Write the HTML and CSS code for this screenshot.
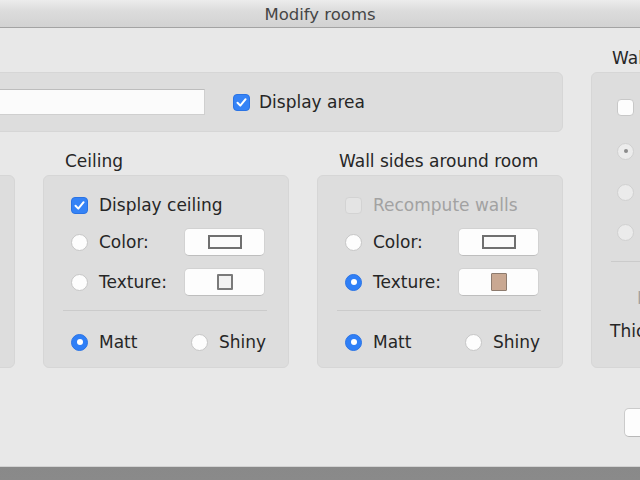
FILE: index.html
```html
<!DOCTYPE html>
<html>
<head>
<meta charset="utf-8">
<link rel="stylesheet" href="styles.css">
</head>
<body>
<div class="window">
  <div class="titlebar">Modify rooms</div>
  <div class="content">
    <div class="main">
      <div class="group top-group">
        <span class="field-label">Name:</span>
        <input class="name-field" type="text" value="">
        <div class="opt"><span class="cb checked"><svg viewBox="0 0 17 17" width="17" height="17"><path d="M4.5 8.8 L7.3 11.6 L12.6 5.2" fill="none" stroke="#fff" stroke-width="2" stroke-linecap="round" stroke-linejoin="round"/></svg></span><span class="lbl">Display area</span></div>
      </div>
      <div class="sections">
        <section class="section">
          <h2 class="section-title">Floor</h2>
          <div class="group panel">
            <div class="row"><span class="cb checked"><svg viewBox="0 0 17 17" width="17" height="17"><path d="M4.5 8.8 L7.3 11.6 L12.6 5.2" fill="none" stroke="#fff" stroke-width="2" stroke-linecap="round" stroke-linejoin="round"/></svg></span><span class="lbl">Display floor</span></div>
            <div class="row r2"><span class="rd"></span><span class="lbl">Color:</span><span class="swatch"><span class="sw-color"></span></span></div>
            <div class="row r3"><span class="rd sel"></span><span class="lbl">Texture:</span><span class="swatch"><span class="sw-tex"></span></span></div>
            <div class="divider"></div>
            <div class="row r4"><span class="finish"><span class="rd sel"></span><span class="lbl">Matt</span></span><span class="finish last"><span class="rd"></span><span class="lbl">Shiny</span></span></div>
          </div>
        </section>
        <section class="section">
          <h2 class="section-title">Ceiling</h2>
          <div class="group panel">
            <div class="row"><span class="cb checked"><svg viewBox="0 0 17 17" width="17" height="17"><path d="M4.5 8.8 L7.3 11.6 L12.6 5.2" fill="none" stroke="#fff" stroke-width="2" stroke-linecap="round" stroke-linejoin="round"/></svg></span><span class="lbl">Display ceiling</span></div>
            <div class="row r2"><span class="rd"></span><span class="lbl">Color:</span><span class="swatch"><span class="sw-color"></span></span></div>
            <div class="row r3"><span class="rd"></span><span class="lbl">Texture:</span><span class="swatch"><span class="sw-tex"></span></span></div>
            <div class="divider"></div>
            <div class="row r4"><span class="finish"><span class="rd sel"></span><span class="lbl">Matt</span></span><span class="finish last"><span class="rd"></span><span class="lbl">Shiny</span></span></div>
          </div>
        </section>
        <section class="section">
          <h2 class="section-title">Wall sides around room</h2>
          <div class="group panel">
            <div class="row"><span class="cb disabled"></span><span class="lbl dis">Recompute walls</span></div>
            <div class="row r2"><span class="rd"></span><span class="lbl">Color:</span><span class="swatch"><span class="sw-color"></span></span></div>
            <div class="row r3"><span class="rd sel"></span><span class="lbl">Texture:</span><span class="swatch"><span class="sw-tex tan"></span></span></div>
            <div class="divider"></div>
            <div class="row r4"><span class="finish"><span class="rd sel"></span><span class="lbl">Matt</span></span><span class="finish last"><span class="rd"></span><span class="lbl">Shiny</span></span></div>
          </div>
        </section>
      </div>
    </div>
    <div class="side">
      <h2 class="section-title">Wall sides baseboard</h2>
      <div class="group side-panel">
        <div class="row"><span class="cb"></span><span class="lbl">Display baseboard</span></div>
        <div class="row s2"><span class="rd dsel"></span><span class="lbl dis">Same color as walls</span></div>
        <div class="row s3"><span class="rd dis-rd"></span><span class="lbl dis">Color:</span></div>
        <div class="row s4"><span class="rd dis-rd"></span><span class="lbl dis">Texture:</span></div>
        <div class="divider side-div"></div>
        <div class="row s5"><span class="lbl dis">Height:</span><span class="spin"></span></div>
        <div class="row s6"><span class="lbl">Thickness:</span><span class="spin"></span></div>
      </div>
    </div>
  </div>
  <div class="footer">
    <button class="btn">Cancel</button>
    <button class="btn">OK</button>
  </div>
</div>
</body>
</html>
```

FILE: styles.css
```css
html, body {
  margin: 0;
  padding: 0;
}
body {
  width: 640px;
  height: 480px;
  overflow: hidden;
  background: linear-gradient(#6c6c6c, #8a8a8a);
  font-family: "DejaVu Sans", sans-serif;
  font-size: 17px;
  color: #262626;
}
.window {
  width: 1156px;
  height: 466px;
  margin-left: -258px;
  background: #e8e8e8;
  display: flex;
  flex-direction: column;
  box-shadow: 0 1px 0 #d2d2d2;
}
.titlebar {
  height: 27px;
  line-height: 29px;
  text-align: center;
  color: #454545;
  font-size: 16.5px;
  background: linear-gradient(#ececec, #dcdcdc 40%, #d2d2d2);
  border-bottom: 1px solid #a3a3a3;
}
.content {
  display: flex;
  gap: 28px;
  padding: 20px 27px 0;
}
.main {
  flex: 0 0 794px;
  min-width: 0;
  padding-top: 24px;
}
.group {
  background: #dddddd;
  border: 1px solid #d6d6d6;
  border-radius: 6px;
  box-sizing: border-box;
}
.top-group {
  height: 60px;
  display: flex;
  align-items: center;
  padding: 0 20px;
}
.field-label {
  width: 43px;
  margin-right: 8px;
}
.name-field {
  width: 364px;
  height: 26px;
  box-sizing: border-box;
  border: 1px solid #cfcfcf;
  border-top-color: #bdbdbd;
  background: #fbfbfb;
  margin: 0 28px 0 0;
  padding: 0 4px;
  font: inherit;
}
.opt {
  display: flex;
  align-items: center;
}
.opt .cb {
  margin-right: 9px;
}
.sections {
  display: flex;
  gap: 28px;
  margin-top: 19px;
}
.section {
  flex: 0 0 246px;
  min-width: 0;
}
.section-title {
  margin: 0 0 4px;
  padding-left: 22px;
  height: 20px;
  line-height: 20px;
  font-size: 17px;
  font-weight: normal;
  color: #262626;
  white-space: nowrap;
}
.panel {
  height: 193px;
  padding: 15px 23px 0 27px;
}
.row {
  height: 28px;
  display: flex;
  align-items: center;
  white-space: nowrap;
}
.r2 { margin-top: 9px; }
.r3 { margin-top: 12px; }
.r4 { margin-top: 17px; }
.divider {
  height: 1px;
  background: #cbcbcb;
  margin: 14px -2px 0 -8px;
}
.lbl {
  margin-left: 11px;
}
.opt .lbl {
  margin-left: 0;
}
.lbl.dis {
  color: #a2a2a2;
}
.cb {
  width: 17px;
  height: 17px;
  box-sizing: border-box;
  border-radius: 4px;
  background: #fdfdfd;
  border: 1px solid #c8c8c8;
  flex: 0 0 auto;
  display: inline-block;
}
.cb svg {
  display: block;
  margin: -1px;
}
.cb.checked {
  background: #3583f6;
  border-color: #2a73e4;
}
.cb.disabled {
  background: #e4e4e4;
  border-color: #d3d3d3;
}
.rd {
  width: 17px;
  height: 17px;
  box-sizing: border-box;
  border-radius: 50%;
  background: #fdfdfd;
  border: 1px solid #c6c6c6;
  flex: 0 0 auto;
  position: relative;
}
.rd.sel {
  background: #2f7ff6;
  border-color: #2a74e6;
}
.rd.sel::after {
  content: "";
  position: absolute;
  left: 4.5px;
  top: 4.5px;
  width: 6px;
  height: 6px;
  border-radius: 50%;
  background: #fff;
}
.rd.dis-rd {
  background: #ebebeb;
  border-color: #d0d0d0;
}
.rd.dsel {
  background: #ececec;
  border-color: #d0d0d0;
}
.rd.dsel::after {
  content: "";
  position: absolute;
  left: 5.5px;
  top: 5.5px;
  width: 4px;
  height: 4px;
  border-radius: 50%;
  background: #8c8c8c;
}
.swatch {
  margin-left: auto;
  width: 81px;
  height: 28px;
  box-sizing: border-box;
  background: #fdfdfd;
  border: 1px solid #d2d2d2;
  border-bottom-color: #bebebe;
  border-radius: 5px;
  display: flex;
  align-items: center;
  justify-content: center;
  flex: 0 0 auto;
}
.sw-color {
  width: 34px;
  height: 14px;
  box-sizing: border-box;
  border: 2px solid #6f6f6f;
  background: #fafafa;
}
.sw-tex {
  width: 16px;
  height: 16px;
  box-sizing: border-box;
  border: 2px solid #7a7a7a;
  background: #f2f2f2;
  border-radius: 1px;
}
.sw-tex.tan {
  height: 18px;
  background: #c9a892;
  border: 1px solid #8d7b6e;
}
.finish {
  display: flex;
  align-items: center;
  flex: 0 0 120px;
}
.finish.last {
  flex: 0 0 auto;
}
.side {
  flex: 0 0 246px;
  min-width: 0;
}
.side .section-title {
  padding-left: 21px;
}
.side-panel {
  height: 296px;
  padding: 20px 23px 0 25px;
}
.s2 { margin-top: 16px; }
.s3 { margin-top: 13px; }
.s4 { margin-top: 12px; }
.side-div {
  margin: 15px -2px 0 -6px;
}
.s5 { margin-top: 22px; padding-left: 20px; }
.s6 { margin-top: 5px; margin-left: -7px; }
.s6 .lbl, .s5 .lbl { margin-left: 0; }
.spin {
  margin-left: auto;
  width: 80px;
  height: 22px;
  background: #fdfdfd;
  border: 1px solid #cfcfcf;
}
.footer {
  margin-top: auto;
  display: flex;
  justify-content: flex-end;
  gap: 12px;
  padding: 0 62px 29px 0;
}
.btn {
  width: 100px;
  height: 29px;
  box-sizing: border-box;
  background: #fdfdfd;
  border: 1px solid #cbcbcb;
  border-bottom-color: #b8b8b8;
  border-radius: 5px;
  font: inherit;
  color: #262626;
}
```
